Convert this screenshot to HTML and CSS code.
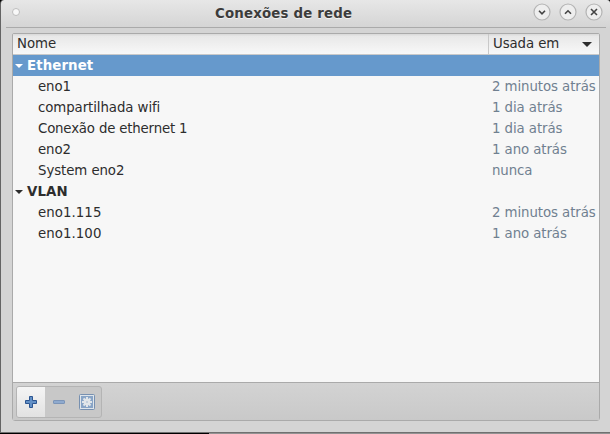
FILE: index.html
```html
<!DOCTYPE html>
<html lang="pt-BR">
<head>
<meta charset="utf-8">
<title>Conexões de rede</title>
<link rel="stylesheet" href="styles.css">
</head>
<body>
<div class="window">
  <header class="titlebar">
    <span class="dot"></span>
    <h1 class="title">Conexões de rede</h1>
    <div class="controls">
      <svg class="control" viewBox="0 0 18 18"><circle cx="9" cy="9" r="8"/><path d="M6 7.8l3 3 3-3"/></svg>
      <svg class="control" viewBox="0 0 18 18"><circle cx="9" cy="9" r="8"/><path d="M6 10.8l3-3 3 3"/></svg>
      <svg class="control" viewBox="0 0 18 18"><circle cx="9" cy="9" r="8"/><path d="M6 6l6 6M12 6l-6 6"/></svg>
    </div>
  </header>
  <main class="panel">
    <div class="head">
      <div class="head-name">Nome</div>
      <div class="head-used">Usada em<svg class="sort" viewBox="0 0 10 5"><path d="M0 0h10L5 5z"/></svg></div>
    </div>
    <div class="list">
      <div class="row group selected"><svg class="expander" viewBox="0 0 8 4"><path d="M0 0h8L4 4z"/></svg>Ethernet</div>
      <div class="row"><span class="name">eno1</span><span class="used">2 minutos atrás</span></div>
      <div class="row"><span class="name">compartilhada wifi</span><span class="used">1 dia atrás</span></div>
      <div class="row"><span class="name long">Conexão de ethernet 1</span><span class="used">1 dia atrás</span></div>
      <div class="row"><span class="name">eno2</span><span class="used">1 ano atrás</span></div>
      <div class="row"><span class="name">System eno2</span><span class="used">nunca</span></div>
      <div class="row group"><svg class="expander" viewBox="0 0 8 4"><path d="M0 0h8L4 4z"/></svg>VLAN</div>
      <div class="row"><span class="name tagged">eno1.115</span><span class="used">2 minutos atrás</span></div>
      <div class="row"><span class="name tagged">eno1.100</span><span class="used">1 ano atrás</span></div>
    </div>
    <footer class="toolbar">
      <div class="buttons">
        <div class="button add"><svg class="icon" viewBox="0 0 16 16"><path d="M6.5 2.5h3v4h4v3h-4v4h-3v-4h-4v-3h4z" fill="#6290c6" stroke="#2c5591" stroke-linejoin="round"/></svg></div>
        <div class="button"><svg class="icon" viewBox="0 0 16 16"><rect x="2.5" y="6.5" width="11" height="3" rx=".5" fill="#8faace" stroke="#7c95b8"/></svg></div>
        <div class="button"><svg class="icon" viewBox="0 0 16 16"><rect x=".5" y=".5" width="15" height="15" rx="1" fill="#dfe5ea" stroke="#7790b0"/><rect x="2" y="2" width="12" height="12" fill="#88a4c6"/><g stroke="#e2e6e9" stroke-width="2"><path d="M8 3v10M3 8h10M4.5 4.5l7 7M11.5 4.5l-7 7"/></g><circle cx="8" cy="8" r="3.4" fill="#e2e6e9"/><circle cx="8" cy="8" r="1" fill="#b9c7d7"/></svg></div>
      </div>
    </footer>
  </main>
</div>
<div class="desktop"></div>
</body>
</html>
```
FILE: styles.css
```css
* { box-sizing: border-box; }
body {
  margin: 0;
  width: 610px;
  height: 434px;
  overflow: hidden;
  background: #000;
  font: 13.33px/21px "DejaVu Sans", sans-serif;
  color: #2d2d2d;
}
.window {
  height: 433px;
  padding: 0 10px 0 11px;
  border-left: 1px solid #646464;
  border-bottom: 1px solid #707070;
  border-radius: 4px 3px 0 0;
  background: linear-gradient(#e7e7e7, #d4d4d4 28px);
}
.titlebar {
  display: flex;
  align-items: center;
  height: 28px;
  margin: 0 -6px 5px -6px;
  padding: 0 3px 3px 6px;
  border-bottom: 1px solid #aaa;
}
.dot {
  width: 8px;
  height: 8px;
  border: 1px solid #bdbdbd;
  border-radius: 50%;
  background: #f8f8f8;
}
.title {
  flex: 1;
  margin: 0;
  padding: 3px 0 0 195px;
  font-size: 13.33px;
  line-height: 21px;
  letter-spacing: .19px;
  color: #3c3c3c;
  text-shadow: 0 1px #f2f2f2;
}
.controls { display: flex; gap: 8px; }
.control {
  width: 18px;
  height: 18px;
  fill: #eee;
  stroke: #b4b4b4;
  stroke-width: 1.2;
}
.control path { fill: none; stroke: #444; stroke-width: 1.6; }
.panel {
  display: flex;
  flex-direction: column;
  height: 388px;
  border: 1px solid #aaa;
  border-radius: 2px 2px 3px 3px;
  background: #f7f7f7;
}
.head {
  display: flex;
  height: 21px;
  line-height: 19px;
  border-bottom: 1px solid #c9c9c9;
  background: linear-gradient(#dcdcdc 0 1px, #e8e8e8 2px, #f8f8f8);
}
.head-name { flex: 1; padding-left: 4px; }
.head-used {
  display: flex;
  justify-content: space-between;
  width: 111px;
  padding: 0 7px 0 4px;
  border-left: 1px solid #c9c9c9;
  letter-spacing: -.09px;
}
.sort { width: 10px; height: 5px; margin-top: 8px; fill: #2d2d2d; }
.list { flex: 1; }
.row { display: flex; height: 21px; letter-spacing: -.08px; }
.name { flex: 1; padding-left: 25px; }
.long { letter-spacing: -.18px; }
.tagged { letter-spacing: .06px; }
.used { width: 107px; color: #708090; white-space: nowrap; }
.group { align-items: center; padding-left: 2px; font-weight: bold; letter-spacing: .1px; }
.selected { background: #6699cc; color: #fff; }
.expander { width: 8px; height: 4px; margin-right: 4px; fill: currentColor; }
.toolbar {
  height: 38px;
  padding: 3px;
  border-top: 1px solid #aaa;
  background: linear-gradient(#d3d3d3, #c9c9c9);
}
.buttons {
  display: flex;
  width: 86px;
  height: 32px;
  border: 1px solid #b4b4b4;
  border-radius: 3px;
  background: #c8c8c8;
}
.button {
  display: flex;
  align-items: center;
  justify-content: center;
  width: 28px;
}
.add { background: linear-gradient(#f5f5f5, #e2e2e2); border-radius: 2px 0 0 2px; }
.icon { width: 16px; height: 16px; }
.desktop {
  height: 1px;
  background: linear-gradient(90deg, #000 209px, #929292 209px);
}
```
